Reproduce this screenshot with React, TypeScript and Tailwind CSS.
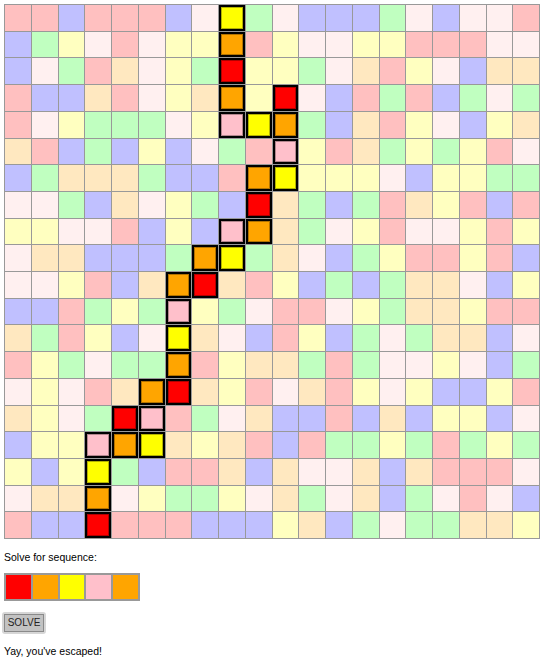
import React from "react";

const ROWS = [
  "RRBRRRBPyGPBBBGPBPPR",
  "BGYPRPYYoRYPPYYRRRPP",
  "BPGROPYGrYYGPORYPBOO",
  "RBBORPYOoYrPBRGRBGPG",
  "RPYGGGPYkyoGBORYPBYO",
  "ORBGBYBPGRkYROGYGYRP",
  "BGOOOGBBRoyYYYPBYYGG",
  "PPGBOPYGBrOGBGROYRBR",
  "YYPPRBYBkoOGPYRPPYRY",
  "POOBBBGoyGOPBGYRRYRB",
  "PPYRBOorORYBGBGOOPBY",
  "BBRGYGkYGPRRPYGOOYRR",
  "OGRYBPyOPBRYBGPGOOBP",
  "RYGPGGoRYOOGRGPPYPBG",
  "PYPROorOYRPORYPYBBYR",
  "OYPGrkRGPOBBRBOBYYBP",
  "BYYkoyOYORBRGGYGRGYG",
  "YBYyGBRROBOPPOBORRRP",
  "POOoPYGGYPOGPOBGPRPB",
  "RBBrRRRBBBYOBGPGGOOY",
];

const PASTEL: Record<string, string> = {
  R: "bg-[#ffc0c0]",
  B: "bg-[#c0c0ff]",
  G: "bg-[#c0ffc0]",
  Y: "bg-[#ffffc0]",
  P: "bg-[#fff0f0]",
  O: "bg-[#ffe8c0]",
};

const PATH: Record<string, string> = {
  r: "bg-[#ff0000]",
  o: "bg-[#ffa500]",
  y: "bg-[#ffff00]",
  k: "bg-[#ffc0cb]",
};

function Cell({ c }: { c: string }) {
  if (PATH[c]) {
    return (
      <div className="border-2 border-black bg-black min-w-0 min-h-0 flex">
        <div className={`flex-1 border border-black/30 ${PATH[c]}`} />
      </div>
    );
  }
  return <div className={`min-w-0 min-h-0 ${PASTEL[c]}`} />;
}

const SEQ = ["bg-[#ff0000]", "bg-[#ffa500]", "bg-[#ffff00]", "bg-[#ffc0cb]", "bg-[#ffa500]"];

export default function App() {
  return (
    <div
      className="bg-white min-h-[660px] pl-[4px] pt-[4px] text-black"
      style={{ fontFamily: '"Liberation Sans", Arial, sans-serif' }}
    >
      <div className="grid grid-cols-[repeat(20,minmax(0,1fr))] grid-rows-[repeat(20,minmax(0,1fr))] gap-px p-px bg-[#999] w-[536px] h-[535px]">
        {ROWS.map((row, ri) =>
          row.split("").map((c, ci) => <Cell key={`${ri}-${ci}`} c={c} />)
        )}
      </div>
      <div className="mt-[12px] text-[10.5px] leading-[13px]">Solve for sequence:</div>
      <div className="mt-[9px] w-[136px] h-[28px] bg-[#999] p-[2px] grid grid-cols-5 gap-[2px]">
        {SEQ.map((s, i) => (
          <div key={i} className={s} />
        ))}
      </div>
      <div className="mt-[11px] -ml-[2px] w-[44px] h-[22px] rounded-[3px] bg-[#d6d6d6] p-[2px] flex">
        <button className="flex-1 bg-[#c2c2c2] border border-[#8a8a8a] text-[10px] leading-none text-[#222] flex items-center justify-center">
          SOLVE
        </button>
      </div>
      <div className="mt-[11px] text-[10.5px] leading-[13px]">Yay, you've escaped!</div>
    </div>
  );
}
